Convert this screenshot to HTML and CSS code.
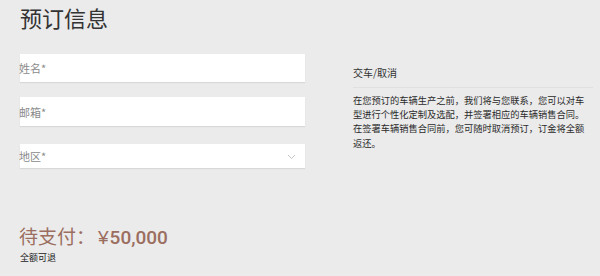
FILE: index.html
```html
<!DOCTYPE html>
<html lang="zh">
<head>
<meta charset="utf-8">
<link rel="stylesheet" href="styles.css">
</head>
<body>
<div class="page">
  <h1 class="title">预订信息</h1>
  <div class="main">
    <div class="form">
      <div class="field f1"><span class="ph">姓名*</span></div>
      <div class="field f2"><span class="ph">邮箱*</span></div>
      <div class="field f3"><span class="ph">地区*</span>
        <svg class="chev" width="9" height="6" viewBox="0 0 9 6"><path d="M1 1 L4.5 4.5 L8 1" fill="none" stroke="#c4c4c4" stroke-width="1"/></svg>
      </div>
    </div>
    <div class="info">
      <div class="info-head">交车/取消</div>
      <p class="info-text">在您预订的车辆生产之前，我们将与您联系，您可以对车型进行个性化定制及选配，并签署相应的车辆销售合同。在签署车辆销售合同前，您可随时取消预订，订金将全额返还。</p>
    </div>
  </div>
  <div class="pay">
    <div class="price">待支付：<span class="yen">¥</span><span class="amt">50,000</span></div>
    <div class="refund">全额可退</div>
  </div>
</div>
</body>
</html>
```
FILE: styles.css
```css
html, body {
  margin: 0;
  padding: 0;
  background: #ebebeb;
  font-family: "Noto Sans CJK SC", "Noto Sans", sans-serif;
  color: #333;
}
.page {
  width: 600px;
  height: 276px;
  padding: 0 8px 0 20px;
  box-sizing: border-box;
}
.title {
  margin: 0;
  padding-top: 3px;
  font-size: 22px;
  font-weight: 400;
  line-height: 28px;
  color: #333;
}
.main {
  display: grid;
  grid-template-columns: 285px 240px;
  column-gap: 48px;
  margin-top: 23px;
}
.form {
  display: flex;
  flex-direction: column;
}
.field {
  background: #fff;
  display: flex;
  align-items: center;
  justify-content: space-between;
  box-shadow: 0 1px 1px rgba(0,0,0,0.08);
  padding-right: 9px;
}
.f1 { height: 28px; }
.f2 { height: 29px; margin-top: 15px; }
.f3 { height: 24px; margin-top: 18px; }
.ph {
  font-size: 11px;
  color: #8a8a8a;
  margin-left: -1px;
}
.chev { margin-top: 2px; }
.info {
  padding-top: 12px;
}
.info-head {
  font-size: 10px;
  line-height: 14px;
  color: #333;
  padding-bottom: 7px;
  border-bottom: 1px solid #e0e0e0;
}
.info-text {
  margin: 5px 0 0;
  width: 233px;
  font-size: 9.25px;
  line-height: 14.2px;
  color: #2a2a2a;
}
.pay {
  margin-top: 57px;
}
.price {
  font-size: 19px;
  line-height: 22px;
  color: #9b6e5f;
  margin-left: -1px;
}
.yen {
  font-family: "Liberation Sans", sans-serif;
  margin-left: 3px;
}
.amt {
  font-family: Roboto, "Liberation Sans", sans-serif;
  font-weight: 500;
  margin-left: 1px;
}
.refund {
  font-size: 9px;
  line-height: 14px;
  color: #222;
  margin-top: 2px;
}
```
